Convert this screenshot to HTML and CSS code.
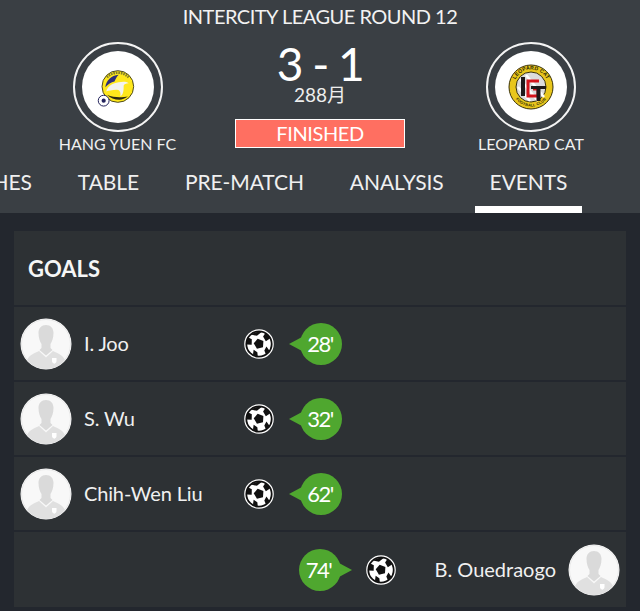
FILE: index.html
```html
<!DOCTYPE html>
<html>
<head>
<meta charset="utf-8">
<title>Match events</title>
<link rel="stylesheet" href="styles.css">
</head>
<body>
<svg class="defs" width="0" height="0">
  <defs>
    <symbol id="ball" viewBox="0 0 30 30">
      <circle cx="15" cy="15" r="14.2" fill="#111" stroke="#fff" stroke-width="1.2"/>
      <circle cx="15" cy="15" r="11.8" fill="#fff"/>
      <g transform="rotate(-14 15 15)">
        <path d="M15 9.500l5 3.600-1.900 5.900h-6.200l-1.900-5.900z" fill="#111"/>
        <path d="M9.500 3.900L15 6.600l5.500-2.700C18.800 3.200 17 2.800 15 2.800s-3.800.4-5.500 1.100z" fill="#111"/>
        <path d="M3 12.400l4.700 1.500 1.500-5.300-3.300-2.900C4.300 7.500 3.300 9.800 3 12.400z" fill="#111"/>
        <path d="M27 12.400l-4.700 1.500-1.500-5.300 3.300-2.900c1.600 1.800 2.600 4.100 2.900 6.700z" fill="#111"/>
        <path d="M6.600 23.800l1.800-4.500 3 3.300-.6 4.300c-1.600-.6-3-1.700-4.200-3.100z" fill="#111"/>
        <path d="M23.400 23.800l-1.800-4.500-3 3.300.6 4.300c1.600-.6 3-1.700 4.200-3.100z" fill="#111"/>
      </g>
    </symbol>
    <symbol id="player" viewBox="0 0 52 52">
      <circle cx="26" cy="26" r="25.500" fill="#fff"/>
      <circle cx="26" cy="26" r="24.500" fill="#f8f8f8" stroke="#e8e8e8" stroke-width="1"/>
      <path d="M18.500 15c0-5 3-8 7.500-8s7.500 3 7.500 8c0 5-1.500 8.500-3 11v4l2 2-6.500 5.500-6.500-5.500 2-2v-4c-1.500-2.500-3-6-3-11z" fill="#dadada"/>
      <path d="M7 42c2-4.500 6.500-6.500 12-9l7 6.500 7-6.500c5.500 2.500 10 4.500 12 9-5 6-11.500 9-19 9s-14-3-19-9z" fill="#e0e0e0"/>
      <path d="M32 40h4.500v3c0 1.300-1 2.200-2.200 2.700-1.300-.5-2.300-1.400-2.300-2.700z" fill="#fff"/>
    </symbol>
  </defs>
</svg>

<header class="hero">
  <div class="league">INTERCITY LEAGUE ROUND 12</div>
  <div class="match">
    <div class="team">
      <div class="crest-ring">
        <div class="crest">
          <svg class="logo logo-home" viewBox="0 0 48 48" width="40" height="40">
            <circle cx="25" cy="21" r="19" fill="#ffe81c" stroke="#2c2a10" stroke-width="1"/>
            <path d="M12 10a18 18 0 0 1 26 0" fill="none" stroke="#85802a" stroke-width="3" stroke-dasharray="2 1"/>
            <path d="M10 22c1-8 7-14 16-15-3 3-4 6-5 8-4 1-8 3-11 7z" fill="#2e2f78"/>
            <path d="M11 27c2-7 8-10 15-11 5-1 9-1 12 1-3 0-6 1-6 3 0 5 0 10-4 13 1-5-1-9-5-8-5 .5-9 1-12 2z" fill="#f3f3ee"/>
            <path d="M12 31c4 4 9 6 15 6 3 0 7-2 10-4-6 1-16 2-25-2z" fill="#2d2a12"/>
            <circle cx="8" cy="38" r="6.500" fill="#fff" stroke="#23235c" stroke-width="1.200"/>
            <circle cx="8" cy="38" r="2.500" fill="#23235c"/>
          </svg>
        </div>
      </div>
      <div class="team-name">HANG YUEN FC</div>
    </div>
    <div class="score-box">
      <div class="score">3 - 1</div>
      <div class="date">288月</div>
      <div class="status">FINISHED</div>
    </div>
    <div class="team team-away">
      <div class="crest-ring">
        <div class="crest">
          <svg class="logo" viewBox="0 0 46 46" width="46" height="46">
            <defs>
              <path id="arc-top" d="M5.500 23a17.500 17.500 0 0 1 35 0"/>
              <path id="arc-bottom" d="M3.500 23a19.500 19.500 0 0 0 39 0"/>
            </defs>
            <circle cx="23" cy="23" r="22" fill="#e8c61c" stroke="#3a3208"/>
            <circle cx="23" cy="23" r="15" fill="#dcdcdc" stroke="#3a3208"/>
            <path d="M12 15l18 22M18 11l18 22M10 23l12 14" stroke="#fff" stroke-width="2.500"/>
            <path d="M13 13h4v19h-4z" fill="#1e1a1a"/>
            <path d="M31 17H20v15h10v-7h-5" fill="none" stroke="#d4141c" stroke-width="3"/>
            <path d="M23 22h15v3h-5.500v12h-4V25H23z" fill="#1e1a1a"/>
            <text class="crest-text"><textPath href="#arc-top" startOffset="50%">LEOPARD CAT</textPath></text>
            <text class="crest-text crest-text-small"><textPath href="#arc-bottom" startOffset="50%">FOOTBALL CLUB</textPath></text>
          </svg>
        </div>
      </div>
      <div class="team-name">LEOPARD CAT</div>
    </div>
  </div>
  <nav class="tabs">
    <span class="tab">MATCHES</span>
    <span class="tab">TABLE</span>
    <span class="tab">PRE-MATCH</span>
    <span class="tab">ANALYSIS</span>
    <span class="tab tab-active">EVENTS</span>
  </nav>
</header>

<main class="panel">
  <h2 class="panel-title">GOALS</h2>
  <div class="row">
    <svg class="avatar"><use href="#player"/></svg>
    <span class="name">I. Joo</span>
    <svg class="ball"><use href="#ball"/></svg>
    <span class="minute minute-home">28'</span>
  </div>
  <div class="row">
    <svg class="avatar"><use href="#player"/></svg>
    <span class="name">S. Wu</span>
    <svg class="ball"><use href="#ball"/></svg>
    <span class="minute minute-home">32'</span>
  </div>
  <div class="row">
    <svg class="avatar"><use href="#player"/></svg>
    <span class="name">Chih-Wen Liu</span>
    <svg class="ball"><use href="#ball"/></svg>
    <span class="minute minute-home">62'</span>
  </div>
  <div class="row row-away">
    <span class="minute minute-away">74'</span>
    <svg class="ball"><use href="#ball"/></svg>
    <span class="name">B. Ouedraogo</span>
    <svg class="avatar"><use href="#player"/></svg>
  </div>
</main>
</body>
</html>
```

FILE: styles.css
```css
* { box-sizing: border-box; }
html, body { height: 100%; }
body {
  margin: 0;
  background: #23272e;
  color: #fff;
  font-family: "Lato", "Noto Sans CJK SC", sans-serif;
  overflow: hidden;
}
.defs { display: block; height: 0; }

.hero {
  height: 213px;
  background: #3a3f44;
  overflow: hidden;
}
.league {
  height: 36px;
  padding-top: 5px;
  text-align: center;
  font-size: 20px;
  line-height: 23px;
  letter-spacing: -0.5px;
  color: #f2f2f2;
}
.match {
  display: flex;
  height: 116px;
  padding-top: 6px;
}
.team {
  width: 235px;
  display: flex;
  flex-direction: column;
  align-items: center;
}
.team-away {
  width: 218px;
  margin-left: 17px;
}
.crest-ring {
  flex: none;
  width: 90px;
  height: 90px;
  border: 2px solid #f4f4f4;
  border-radius: 50%;
  display: flex;
  align-items: center;
  justify-content: center;
}
.crest {
  width: 72px;
  height: 72px;
  background: #fff;
  border-radius: 50%;
  display: flex;
  align-items: center;
  justify-content: center;
}
.logo-home { margin: 3px 2px 0 0; }
.crest-text {
  font-family: "Liberation Sans", sans-serif;
  font-size: 5.2px;
  font-weight: 700;
  letter-spacing: 0.2px;
  fill: #2e2808;
  text-anchor: middle;
}
.crest-text-small { font-size: 3.8px; }
.team-name {
  margin-top: 3px;
  font-size: 16px;
  line-height: 18px;
  color: #f0f0f0;
  white-space: nowrap;
}
.score-box {
  width: 170px;
  display: flex;
  flex-direction: column;
  align-items: center;
}
.score {
  height: 44px;
  font-size: 46px;
  line-height: 44px;
  letter-spacing: -1.5px;
  white-space: nowrap;
}
.date {
  font-size: 19px;
  line-height: 18px;
  color: #eee;
}
.status {
  width: 170px;
  height: 29px;
  margin-top: 15px;
  background: #ff6f61;
  border: 1px solid #fff;
  text-align: center;
  font-size: 20px;
  line-height: 27px;
  letter-spacing: -0.4px;
}
.tabs {
  display: flex;
  gap: 17px;
  height: 61px;
  margin-left: -79.5px;
  white-space: nowrap;
}
.tab {
  padding: 0 14.5px;
  height: 61px;
  font-size: 21px;
  line-height: 60px;
  letter-spacing: -0.1px;
  color: #f0f0f0;
}
.tab-active { border-bottom: 7px solid #fff; }

.panel {
  margin: 18px 14px 0;
  background: #2d3134;
}
.panel-title {
  margin: 0;
  height: 76px;
  padding-left: 14px;
  font-size: 22px;
  font-weight: 700;
  line-height: 76px;
  color: #f6f6f6;
  border-bottom: 2px solid #23272e;
}
.row {
  display: flex;
  align-items: center;
  height: 75px;
  padding: 0 6px;
  border-bottom: 2px solid #23272e;
}
.row:last-child { border-bottom: 0; }
.row-away { justify-content: flex-end; }
.avatar { width: 52px; height: 52px; flex: none; }
.name {
  font-size: 20px;
  line-height: 24px;
  color: #f0f0f0;
  margin: 0 0 2px 12px;
  width: 160px;
  letter-spacing: -0.15px;
  white-space: nowrap;
}
.ball { width: 30px; height: 30px; flex: none; }
.minute {
  position: relative;
  width: 42px;
  height: 42px;
  padding-right: 2px;
  flex: none;
  border-radius: 50%;
  background: #4fa72f;
  text-align: center;
  font-size: 22px;
  line-height: 42px;
  letter-spacing: -1.5px;
  color: #fff;
}
.minute::before {
  content: "";
  position: absolute;
  top: 14px;
  border: 7px solid transparent;
}
.minute-home { margin-left: 26px; }
.minute-home::before { left: -11px; border-right: 13px solid #4fa72f; border-left: 0; }
.minute-away { margin-right: 25px; }
.minute-away::before { right: -11px; border-left: 13px solid #4fa72f; border-right: 0; }
.row-away .name { width: auto; margin: 0 12px 2px 39px; letter-spacing: 0; }
```
